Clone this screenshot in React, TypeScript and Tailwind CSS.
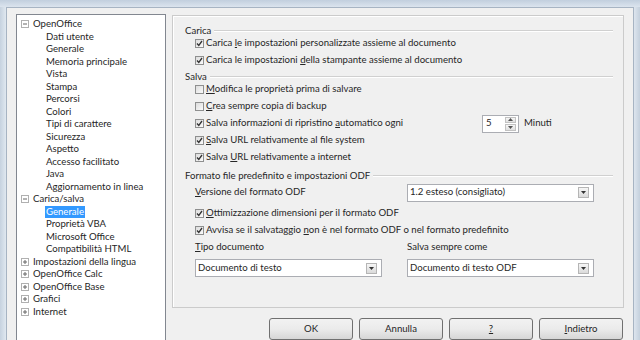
import React from "react";

type TreeItem = {
  label: string;
  level: 0 | 1;
  expander?: "plus" | "minus";
  selected?: boolean;
};

const treeItems: TreeItem[] = [
  { label: "OpenOffice", level: 0, expander: "minus" },
  { label: "Dati utente", level: 1 },
  { label: "Generale", level: 1 },
  { label: "Memoria principale", level: 1 },
  { label: "Vista", level: 1 },
  { label: "Stampa", level: 1 },
  { label: "Percorsi", level: 1 },
  { label: "Colori", level: 1 },
  { label: "Tipi di carattere", level: 1 },
  { label: "Sicurezza", level: 1 },
  { label: "Aspetto", level: 1 },
  { label: "Accesso facilitato", level: 1 },
  { label: "Java", level: 1 },
  { label: "Aggiornamento in linea", level: 1 },
  { label: "Carica/salva", level: 0, expander: "minus" },
  { label: "Generale", level: 1, selected: true },
  { label: "Proprietà VBA", level: 1 },
  { label: "Microsoft Office", level: 1 },
  { label: "Compatibilità HTML", level: 1 },
  { label: "Impostazioni della lingua", level: 0, expander: "plus" },
  { label: "OpenOffice Calc", level: 0, expander: "plus" },
  { label: "OpenOffice Base", level: 0, expander: "plus" },
  { label: "Grafici", level: 0, expander: "plus" },
  { label: "Internet", level: 0, expander: "plus" },
];

const Expander = ({ kind }: { kind: "plus" | "minus" }) => (
  <div className="w-[8px] h-[8px] border border-[#b0b0b0] bg-white flex items-center justify-center">
    <svg width="6" height="6" viewBox="0 0 6 6">
      <path d="M1 3h4" stroke="#666" strokeWidth="1" />
      {kind === "plus" && <path d="M3 1v4" stroke="#666" strokeWidth="1" />}
    </svg>
  </div>
);

const CheckBox = ({ checked }: { checked: boolean }) => (
  <div className="w-[9px] h-[9px] shrink-0 border border-[#8e8f8f] bg-gradient-to-br from-[#dcdcdc] to-[#fbfbfb] flex items-center justify-center">
    {checked && (
      <svg width="7" height="7" viewBox="0 0 7 7">
        <path d="M1 3.5l1.8 2L6 1" fill="none" stroke="#333" strokeWidth="1.3" />
      </svg>
    )}
  </div>
);

const Header = ({ text }: { text: string }) => (
  <div className="flex items-center h-[9px]">
    <span className="leading-none whitespace-nowrap">{text}</span>
    <div className="flex-1 ml-[3px] h-[2px] border-t border-[#d0d0d0] bg-white" />
  </div>
);

const CheckRow = ({
  checked,
  children,
}: {
  checked: boolean;
  children: React.ReactNode;
}) => (
  <div className="flex items-center h-[17px] pl-[10px]">
    <CheckBox checked={checked} />
    <span className="ml-[2px] whitespace-nowrap">{children}</span>
  </div>
);

const Combo = ({ value }: { value: string }) => (
  <div className="w-[187px] h-[18px] bg-white border border-[#abadb3] flex items-center pl-[2px]">
    <span className="whitespace-nowrap">{value}</span>
    <div className="ml-auto mr-[4px] w-[11px] h-[11px] border border-[#b5b5b5] bg-gradient-to-b from-[#f6f6f6] to-[#dadada] flex items-center justify-center">
      <svg width="5" height="3" viewBox="0 0 5 3">
        <path d="M0 0h5L2.5 3z" fill="#333" />
      </svg>
    </div>
  </div>
);

const Btn = ({ children }: { children: React.ReactNode }) => (
  <div className="w-[84px] h-[22px] rounded-[3px] border border-[#707070] bg-gradient-to-b from-[#f2f2f2] via-[#ebebeb] to-[#d6d6d6] flex items-center justify-center pt-[1px]">
    {children}
  </div>
);

const U = ({ children }: { children: React.ReactNode }) => (
  <span className="underline decoration-1 underline-offset-[1px]">{children}</span>
);

export default function App() {
  return (
    <div className="w-[640px] h-[340px] overflow-hidden flex flex-col bg-[#d3dde9] text-[9.6px] text-[#262626] font-['Lato',sans-serif]">
      {/* window frame top */}
      <div className="h-[7px] shrink-0 bg-gradient-to-b from-[#c2cfde] to-[#dbe4ee]" />
      <div className="flex flex-1 min-h-0">
        <div className="w-[6px] shrink-0 bg-gradient-to-r from-[#c6d2df] to-[#e0e8f0]" />
        <div className="flex-1 bg-[#f0f0f0] border-l border-t border-[#a7b4c3] flex pl-[9px] pt-[6px] gap-[6px] overflow-hidden">
          {/* tree */}
          <div className="w-[150px] h-[400px] shrink-0 bg-white border border-[#828790] pt-[3px]">
            {treeItems.map((item, i) => (
              <div key={i} className="h-[12.5px] flex items-center">
                {item.level === 0 ? (
                  <>
                    <div className="w-[4px]" />
                    {item.expander && <Expander kind={item.expander} />}
                    <span className="ml-[4px] whitespace-nowrap leading-none">{item.label}</span>
                  </>
                ) : (
                  <span
                    className={`ml-[28px] px-[1px] whitespace-nowrap leading-[12px] ${
                      item.selected ? "bg-[#3399ff] text-white" : ""
                    }`}
                  >
                    {item.label}
                  </span>
                )}
              </div>
            ))}
          </div>

          {/* right column */}
          <div className="flex flex-col w-[452px] shrink-0">
            <div className="mt-[1px] h-[297px] border border-[#cbcbcb] shadow-[inset_1px_1px_0_#fff] pl-[12px] pr-[10px] pt-[10px] flex flex-col">
              <Header text="Carica" />
              <CheckRow checked>
                Carica <U>l</U>e impostazioni personalizzate assieme al documento
              </CheckRow>
              <CheckRow checked>
                Carica le impostazioni <U>d</U>ella stampante assieme al documento
              </CheckRow>
              <div className="mt-[3px]">
                <Header text="Salva" />
              </div>
              <CheckRow checked={false}>
                <U>M</U>odifica le proprietà prima di salvare
              </CheckRow>
              <CheckRow checked={false}>
                <U>C</U>rea sempre copia di backup
              </CheckRow>
              <div className="flex items-center h-[17px] pl-[10px]">
                <CheckBox checked />
                <span className="ml-[2px] w-[276px] whitespace-nowrap">
                  Salva informazioni di ripristino <U>a</U>utomatico ogni
                </span>
                <div className="w-[37px] h-[18px] bg-white border border-[#abadb3] flex items-center pl-[3px]">
                  <span>5</span>
                  <div className="ml-auto mr-[2px] w-[11px] h-[14px] flex flex-col gap-[1px]">
                    <div className="flex-1 border border-[#c2c2c2] bg-gradient-to-b from-[#f6f6f6] to-[#e0e0e0] flex items-center justify-center">
                      <svg width="5" height="3" viewBox="0 0 5 3">
                        <path d="M0 3h5L2.5 0z" fill="#555" />
                      </svg>
                    </div>
                    <div className="flex-1 border border-[#c2c2c2] bg-gradient-to-b from-[#f6f6f6] to-[#e0e0e0] flex items-center justify-center">
                      <svg width="5" height="3" viewBox="0 0 5 3">
                        <path d="M0 0h5L2.5 3z" fill="#555" />
                      </svg>
                    </div>
                  </div>
                </div>
                <span className="ml-[5px]">Minuti</span>
              </div>
              <CheckRow checked>
                <U>S</U>alva URL relativamente al file system
              </CheckRow>
              <CheckRow checked>
                Salva <U>U</U>RL relativamente a internet
              </CheckRow>
              <div className="mt-[5px]">
                <Header text="Formato file predefinito e impostazioni ODF" />
              </div>
              <div className="flex items-center h-[25px] pl-[10px]">
                <span className="w-[212px] whitespace-nowrap">
                  <U>V</U>ersione del formato ODF
                </span>
                <Combo value="1.2 esteso (consigliato)" />
              </div>
              <CheckRow checked>
                <U>O</U>ttimizzazione dimensioni per il formato ODF
              </CheckRow>
              <CheckRow checked>
                Avvisa se il salvataggio <U>n</U>on è nel formato ODF o nel formato predefinito
              </CheckRow>
              <div className="flex items-center h-[17px] pl-[10px]">
                <span className="w-[212px]">
                  <U>T</U>ipo documento
                </span>
                <span>Salva sempre come</span>
              </div>
              <div className="flex items-center mt-[3px] pl-[10px]">
                <div className="w-[212px]">
                  <Combo value="Documento di testo" />
                </div>
                <Combo value="Documento di testo ODF" />
              </div>
            </div>

            {/* buttons */}
            <div className="mt-[10px] flex justify-end gap-[6px] pr-[1px]">
              <Btn>OK</Btn>
              <Btn>Annulla</Btn>
              <Btn>
                <U>?</U>
              </Btn>
              <Btn>
                <U>I</U>ndietro
              </Btn>
            </div>
          </div>
        </div>
        <div className="w-[7px] shrink-0 border-l border-[#a7b4c3] bg-gradient-to-r from-[#dde5ee] to-[#c4d0dd]" />
      </div>
    </div>
  );
}
